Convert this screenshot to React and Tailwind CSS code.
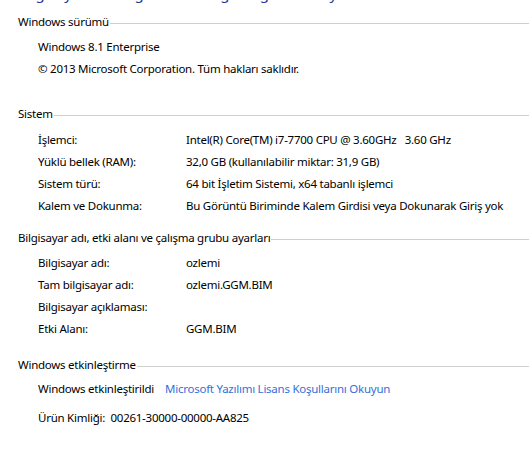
import React from "react";

const FONT = { fontFamily: '"Noto Sans", "Open Sans", sans-serif' };

function SectionTitle({ children, className = "" }) {
  return (
    <div className={`flex items-center h-[22px] ${className}`}>
      <span className="whitespace-nowrap pr-[1px]">{children}</span>
      <div className="flex-1 h-px bg-[#cfcfcf] mt-[2px]" />
    </div>
  );
}

function InfoRow({ label, value }) {
  return (
    <div className="grid grid-cols-[148px_1fr] h-[22px] items-center pl-[20px]">
      <span className="whitespace-nowrap">{label}</span>
      <span className="whitespace-pre">{value}</span>
    </div>
  );
}

export default function App() {
  const system = [
    ["İşlemci:", "Intel(R) Core(TM) i7-7700 CPU @ 3.60GHz\u00a0\u00a0\u00a03.60 GHz"],
    ["Yüklü bellek (RAM):", "32,0 GB (kullanılabilir miktar: 31,9 GB)"],
    ["Sistem türü:", "64 bit İşletim Sistemi, x64 tabanlı işlemci"],
    ["Kalem ve Dokunma:", "Bu Görüntü Biriminde Kalem Girdisi veya Dokunarak Giriş yok"],
  ];
  const computer = [
    ["Bilgisayar adı:", "ozlemi"],
    ["Tam bilgisayar adı:", "ozlemi.GGM.BIM"],
    ["Bilgisayar açıklaması:", ""],
    ["Etki Alanı:", "GGM.BIM"],
  ];

  return (
    <div
      className="w-[529px] h-[451px] overflow-hidden bg-white text-black text-[11.5px] tracking-[-0.25px] leading-[22px] pl-[18px]"
      style={FONT}
    >
      {/* page title, scrolled mostly out of view */}
      <div className="h-[20px] leading-[20px] text-[15px] text-[#1e3a94] tracking-normal -mt-[17px] whitespace-nowrap">
        Bilgisayarınızla ilgili temel bilgileri görüntüleyin
      </div>

      <SectionTitle className="mt-[8px]">Windows sürümü</SectionTitle>
      <div className="mt-[3px] pl-[20px]">
        <div className="h-[22px]">Windows 8.1 Enterprise</div>
        <div className="h-[22px]">© 2013 Microsoft Corporation. Tüm hakları saklıdır.</div>
      </div>

      <SectionTitle className="mt-[23px]">Sistem</SectionTitle>
      <div className="mt-[4px]">
        {system.map(([l, v]) => (
          <InfoRow key={l} label={l} value={v} />
        ))}
      </div>

      <SectionTitle className="mt-[10px]">Bilgisayar adı, etki alanı ve çalışma grubu ayarları</SectionTitle>
      <div className="mt-[3px]">
        {computer.map(([l, v]) => (
          <InfoRow key={l} label={l} value={v} />
        ))}
      </div>

      <SectionTitle className="mt-[14px]">Windows etkinleştirme</SectionTitle>
      <div className="mt-[2px] pl-[20px]">
        <div className="flex gap-[11px] h-[22px] whitespace-nowrap">
          <span>Windows etkinleştirildi</span>
          <span className="text-[#3470d8]">Microsoft Yazılımı Lisans Koşullarını Okuyun</span>
        </div>
        <div className="h-[22px] mt-[7px] whitespace-pre">Ürün Kimliği:  00261-30000-00000-AA825</div>
      </div>
    </div>
  );
}
